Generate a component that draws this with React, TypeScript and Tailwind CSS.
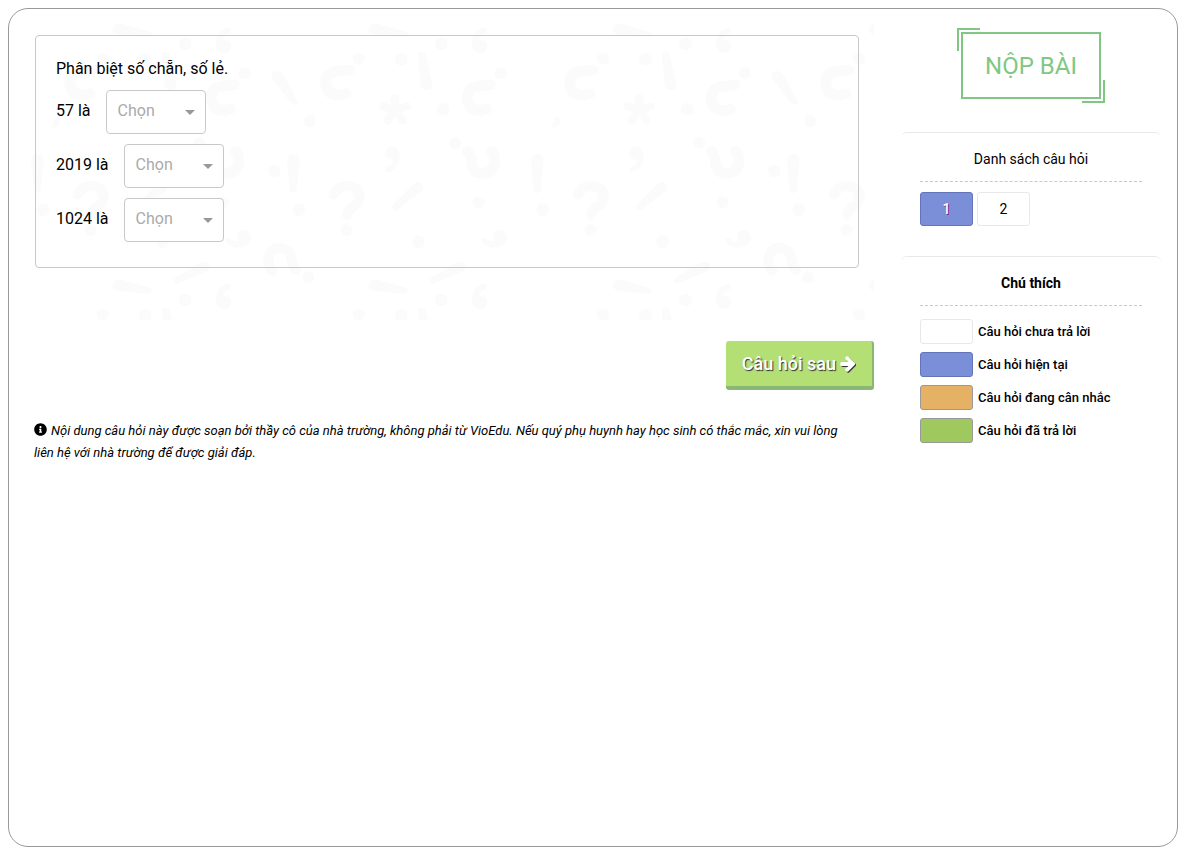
import { FaInfoCircle } from 'react-icons/fa';

const questions = [
  { id: 'q57', text: '57 là' },
  { id: 'q2019', text: '2019 là' },
  { id: 'q1024', text: '1024 là' },
];

const legends = [
  { label: 'Câu hỏi chưa trả lời', color: 'bg-white border-[#e8e8e8]' },
  { label: 'Câu hỏi hiện tại', color: 'bg-[#7b8ed8] border-[#6474b8]' },
  { label: 'Câu hỏi đang cân nhắc', color: 'bg-[#e4b165] border-[#999999]' },
  { label: 'Câu hỏi đã trả lời', color: 'bg-[#9fc85f] border-[#999999]' },
];

// Faint punctuation marks behind the question
function PunctuationBackdrop() {
  return (
    <svg
      className="absolute left-0 top-0 h-[300px] w-[849px] max-w-none text-[#fbfbfb]"
      viewBox="0 0 2547 900"
      fill="currentColor"
      stroke="none"
      aria-hidden="true"
    >
      <defs>
        <g id="marks">
          <path d="M346 40 L438 65 Q446 68 443 76 Q441 83 430 82 L346 75 Q327 73 327 58 Q329 40 346 40Z" />
          <path d="M346 808 L438 833 Q446 836 443 844 Q441 852 430 851 L346 843 Q327 841 327 826 Q329 808 346 808Z" />
          <circle cx="297" cy="146" r="18" />
          <circle cx="424" cy="148" r="19" />
          <circle cx="544" cy="101" r="19" />
          <circle cx="722" cy="190" r="18" />
          <circle cx="550" cy="298" r="19" />
          <circle cx="585" cy="399" r="18" />
          <circle cx="116" cy="600" r="19" />
          <circle cx="260" cy="660" r="18" />
          <circle cx="656" cy="577" r="18" />
          <circle cx="475" cy="695" r="19" />
          <circle cx="544" cy="870" r="19" />
          <circle cx="297" cy="914" r="18" />
          <circle cx="424" cy="916" r="19" />
          <path d="M474 140 Q474 125 486 125 Q495 126 498 138 L518 226 Q519 238 502 241 Q485 241 482 226Z" />
          <path d="M474 908 Q474 893 486 893 Q495 894 498 906 L510 950 L480 950Z" />
          <path d="M680 57 Q686 66 674 71 Q658 76 657 90 Q682 89 682 109 Q679 129 661 129 Q635 127 636 98 Q638 60 671 53Z" />
          <path d="M680 825 Q686 834 674 839 Q658 844 657 858 Q682 857 682 877 Q679 897 661 897 Q635 895 636 866 Q638 828 671 821Z" />
          <g fill="none" stroke="currentColor" strokeLinecap="round" strokeLinejoin="round">
            <path strokeWidth="32" d="M267 180 L235 183 Q197 187 197 221 Q201 255 236 256 L257 251" />
            <path strokeWidth="32" d="M692 224 L658 229 Q621 234 621 267 Q625 301 663 302 L680 297" />
            <path strokeWidth="32" d="M622 424 Q634 438 635 463 Q641 490 668 490 Q702 488 704 454 Q705 435 695 423" />
            <path strokeWidth="30" d="M221 553 Q236 527 262 528 Q299 531 299 561 Q298 580 276 592 Q263 601 261 615" />
            <path strokeWidth="24" d="M405 264 L405 300 M370 289 L405 300 L441 289 M383 331 L405 300 L428 331" />
          </g>
          <path d="M396 407 Q420 411 419 441 Q415 480 386 486 Q371 486 376 474 Q397 466 399 449 Q375 449 375 429 Q377 409 396 407Z" />
          <path d="M81 450 Q83 432 99 431 Q117 433 118 450 L110 538 Q107 549 99 549 Q91 548 89 538Z" />
          <path d="M471 516 Q489 516 491 533 L488 541 L411 601 Q400 606 396 594 Q396 587 406 577 L460 522Z" />
          <path d="M720 660 Q740 664 741 684 Q734 713 698 713 Q667 707 663 689 Q668 681 679 686 Q689 696 702 695 Q695 673 706 664Z" />
          <path d="M508 808 L580 762 Q606 753 616 758 Q623 777 603 787 L520 822 Q514 824 508 808Z" />
        </g>
        <g id="joints">
          <path d="M34 200 Q35 182 53 183 Q63 184 71 195 L112 273 Q115 284 105 285 Q99 286 91 276 L38 208Z" />
          <circle cx="150" cy="334" r="18" />
          <circle cx="43" cy="483" r="19" />
          <circle cx="145" cy="802" r="18" />
          <path
            fill="none"
            stroke="currentColor"
            strokeWidth="30"
            strokeLinecap="round"
            d="M36 782 Q22 760 26 740 Q35 713 60 713 Q88 715 94 745 Q96 767 108 780"
          />
        </g>
        <path id="chip" d="M155 320 Q168 315 169 329 Q168 348 151 353 Q140 354 144 344Z" />
      </defs>
      <use href="#marks" x="-63" y="-30" />
      <use href="#chip" x="-63" y="-30" />
      <use href="#marks" x="705" y="-30" />
      <use href="#joints" x="705" y="-30" />
      <use href="#marks" x="1437" y="-30" />
      <use href="#chip" x="1437" y="-30" />
      <use href="#marks" x="2205" y="-30" />
      <use href="#joints" x="2205" y="-30" />
    </svg>
  );
}

function ArrowRight() {
  return (
    <svg className="size-4 [filter:drop-shadow(1px_1px_0px_#333)]" viewBox="0 0 1536 1600" fill="currentColor" aria-hidden="true">
      <path d="M1472 800q0 54-37 91l-651 651q-39 37-91 37-51 0-90-37l-75-75q-38-38-38-91t38-91l293-293H117q-52 0-84.5-37.5T0 864V736q0-53 32.500-90.500T117 608h704L528 314q-38-36-38-90t38-90l75-75q38-38 90-38 53 0 91 38l651 651q37 35 37 90z" />
    </svg>
  );
}

function AnswerSelect({ id }: { id: string }) {
  return (
    <div className="relative">
      <select
        id={id}
        defaultValue=""
        className="block h-11 w-[100px] appearance-none rounded border border-[#c8c8c8] bg-white pl-[11px] pb-[2px] text-base text-[#aaaaaa] outline-none"
      >
        <option value="">Chọn</option>
        <option value="even">số chẵn</option>
        <option value="odd">số lẻ</option>
      </select>
      <svg className="pointer-events-none absolute right-[11px] top-5 h-[5px] w-[10px]" viewBox="0 0 10 5" aria-hidden="true">
        <path d="M0 0h10L5 5z" fill="#999999" />
      </svg>
    </div>
  );
}

export default function App() {
  return (
    <div className="flex min-h-screen pt-2 pr-3 pb-1 pl-2 font-[Roboto,'Noto_Sans',sans-serif] text-black">
      <div className="flex flex-1 gap-[27px] rounded-[20px] border border-[#999999] px-4">
        <main className="min-w-0 flex-1 pt-[11px]">
          <section className="relative min-h-[300px] overflow-hidden pt-[15px] pr-[15px] pl-[10px]">
            <PunctuationBackdrop />
            <div className="relative rounded-[4px] border border-[#c8c8c8] px-5 pt-[21px] pb-[25px]">
              <p className="mb-[9px] text-base leading-6">Phân biệt số chẵn, số lẻ.</p>
              <div className="flex flex-col gap-[10px]">
                {questions.map((q) => (
                  <div key={q.id} className="flex items-start gap-[15px]">
                    <label htmlFor={q.id} className="pt-[9px] text-base leading-6">{q.text}</label>
                    <AnswerSelect id={q.id} />
                  </div>
                ))}
              </div>
            </div>
          </section>

          <div className="mt-[21px] flex justify-end">
            <button
              type="button"
              className="flex h-[49px] items-center gap-1 rounded-[3px] border-r-2 border-b-4 border-[#8ab874] bg-[#b4df75] px-4 text-lg font-medium text-white [text-shadow:1px_1px_1px_#333]"
            >
              Câu hỏi sau
              <ArrowRight />
            </button>
          </div>

          <p className="mt-[30px] pr-4 pl-[9px] text-[13px] leading-[22px] italic">
            <FaInfoCircle size={13} className="mr-1 inline align-[-1px]" />
            Nội dung câu hỏi này được soạn bởi thầy cô của nhà trường, không phải từ VioEdu. Nếu quý phụ huynh hay học sinh có thắc mắc, xin vui lòng liên hệ với nhà trường để được giải đáp.
          </p>
        </main>

        <aside className="w-[260px] shrink-0 pt-[23px]">
          <button
            type="button"
            className="relative mx-auto block h-[67px] w-[140px] border-2 border-[#81c784] text-2xl text-[#81c784]"
          >
            NỘP BÀI
            <span className="absolute -top-[6px] -left-[6px] size-[23px] border-t-2 border-l-2 border-[#81c784]" />
            <span className="absolute -right-[6px] -bottom-[6px] size-[23px] border-r-2 border-b-2 border-[#81c784]" />
          </button>

          <section className="mt-[33px] rounded-[6px] border-t border-[#e8e8e8] px-[19px] pt-4">
            <h2 className="border-b border-dashed border-[#c8c8c8] pb-3 text-center text-sm leading-5">Danh sách câu hỏi</h2>
            <div className="mt-[10px] flex gap-1">
              <button
                type="button"
                className="h-[34px] w-[53px] rounded-[3px] border border-[#6474b8] bg-[#7b8ed8] text-sm font-medium text-white [text-shadow:1px_1px_0px_#8a1a6a]"
              >
                1
              </button>
              <button type="button" className="h-[34px] w-[53px] rounded-[3px] border border-[#e8e8e8] bg-white text-sm">
                2
              </button>
            </div>
          </section>

          <section className="mt-[30px] rounded-[6px] border-t border-[#e8e8e8] px-[19px] pt-4">
            <h2 className="border-b border-dashed border-[#c8c8c8] pb-3 text-center text-sm leading-5 font-bold">Chú thích</h2>
            <ul className="mt-[13px] flex flex-col gap-2">
              {legends.map((item) => (
                <li key={item.label} className="flex items-center gap-[5px] text-[13px] font-medium">
                  <span className={`h-[25px] w-[53px] rounded-[3px] border ${item.color}`} />
                  {item.label}
                </li>
              ))}
            </ul>
          </section>
        </aside>
      </div>
    </div>
  );
}
